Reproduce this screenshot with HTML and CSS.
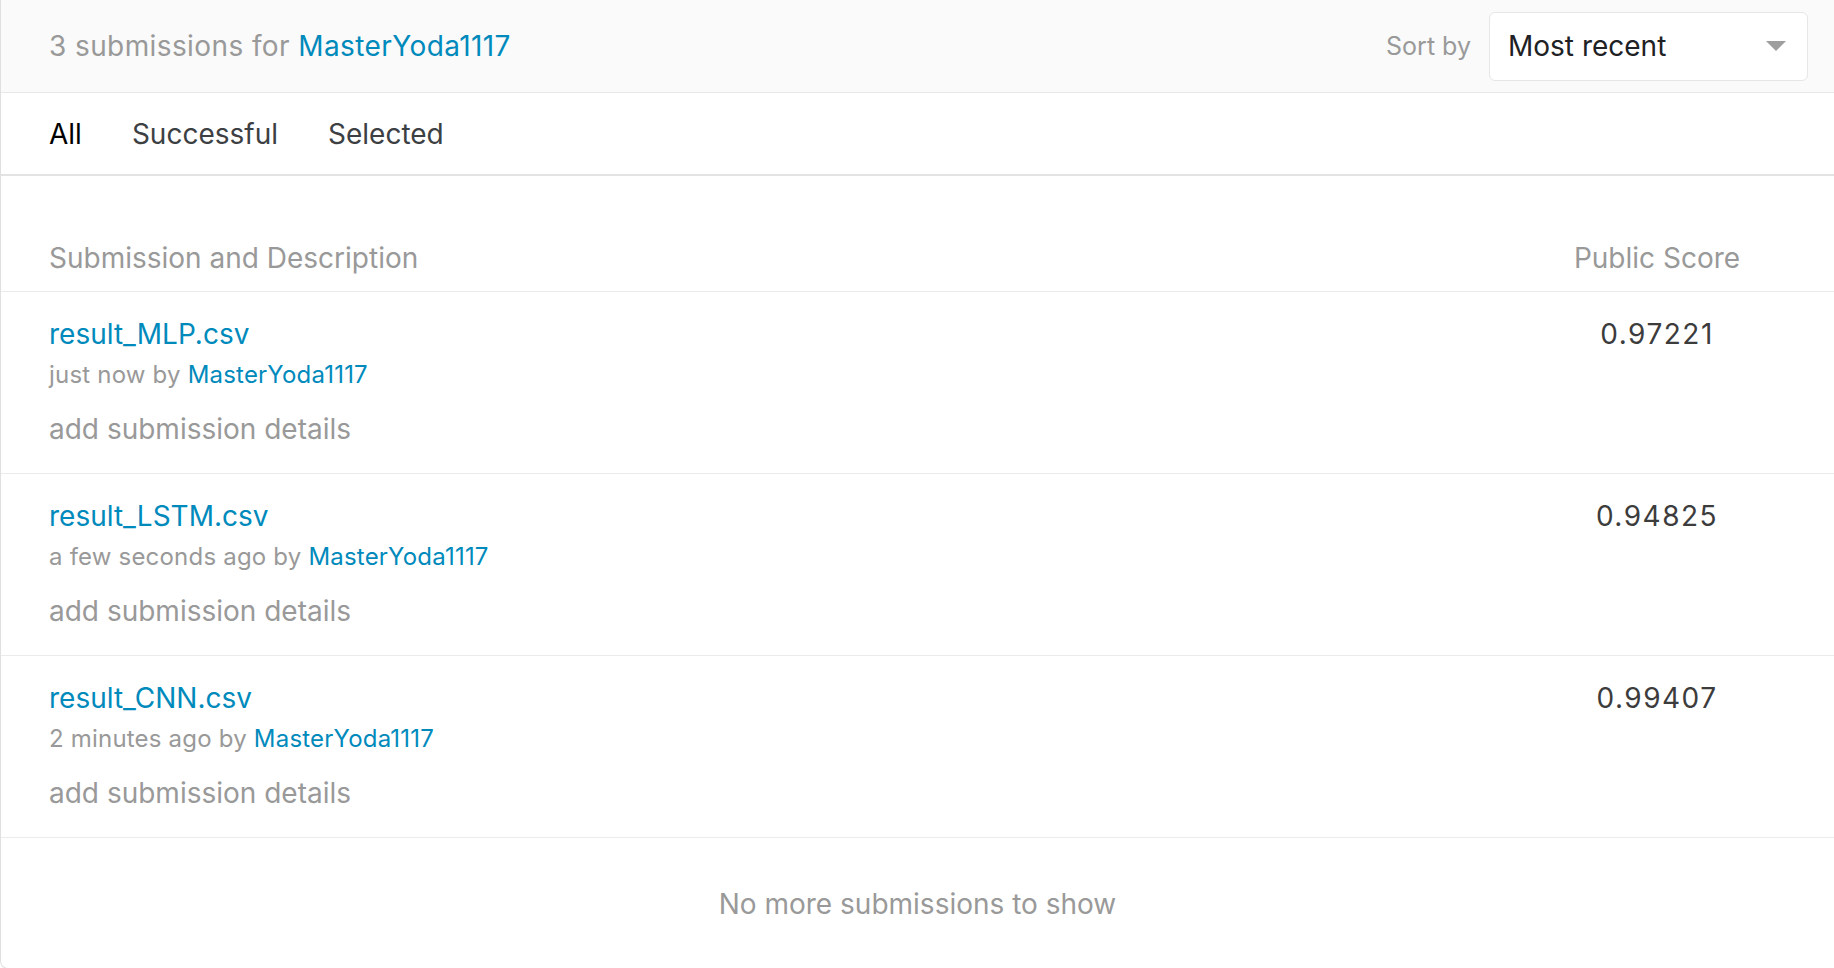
FILE: index.html
```html
<!DOCTYPE html>
<html lang="en">
<head>
<meta charset="utf-8">
<title>Submissions</title>
<link rel="stylesheet" href="styles.css">
</head>
<body>
<div class="card">
  <header class="top">
    <div class="count">3 submissions for <a class="link" href="#">MasterYoda1117</a></div>
    <div class="sort">
      <span class="sort-label">Sort by</span>
      <div class="select">
        <span class="select-value">Most recent</span>
        <svg class="caret" width="20" height="10" viewBox="0 0 20 10"><path d="M0 0 L20 0 L10 10 Z" fill="#9e9e9e"/></svg>
      </div>
    </div>
  </header>
  <nav class="tabs">
    <a class="tab active" href="#">All</a>
    <a class="tab" href="#">Successful</a>
    <a class="tab" href="#">Selected</a>
  </nav>
  <div class="table">
    <div class="thead">
      <div class="col-main">Submission and Description</div>
      <div class="col-score">Public Score</div>
    </div>
    <div class="row">
      <div class="col-main">
        <a class="file" href="#">result_MLP.csv</a>
        <div class="meta">just now by <a class="link" href="#">MasterYoda1117</a></div>
        <div class="details">add submission details</div>
      </div>
      <div class="col-score score">0.97221</div>
    </div>
    <div class="row">
      <div class="col-main">
        <a class="file" href="#">result_LSTM.csv</a>
        <div class="meta">a few seconds ago by <a class="link" href="#">MasterYoda1117</a></div>
        <div class="details">add submission details</div>
      </div>
      <div class="col-score score">0.94825</div>
    </div>
    <div class="row">
      <div class="col-main">
        <a class="file" href="#">result_CNN.csv</a>
        <div class="meta">2 minutes ago by <a class="link" href="#">MasterYoda1117</a></div>
        <div class="details">add submission details</div>
      </div>
      <div class="col-score score">0.99407</div>
    </div>
    <div class="footer">No more submissions to show</div>
  </div>
</div>
</body>
</html>
```
FILE: styles.css
```css
html, body {
  margin: 0;
  padding: 0;
  background: #ffffff;
  overflow: hidden;
}
body {
  font-family: Inter, "Noto Sans", sans-serif;
  color: #3c3c3c;
}
a { text-decoration: none; }
.card {
  border-left: 1px solid #e0e0e0;
  border-bottom: 1px solid #e0e0e0;
  border-bottom-left-radius: 8px;
  min-height: 968px;
}
.top {
  height: 92px;
  background: #fafafa;
  border-bottom: 1px solid #e8e8e8;
  display: flex;
  align-items: center;
  justify-content: space-between;
  padding: 0 26px 0 48px;
}
.count {
  font-size: 28px;
  letter-spacing: 0.4px;
  color: #999999;
}
.link { color: #008abc; }
.sort {
  display: flex;
  align-items: center;
  gap: 18px;
}
.sort-label {
  font-size: 25px;
  color: #999999;
}
.select {
  box-sizing: border-box;
  width: 319px;
  height: 69px;
  border: 1px solid #e6e6e6;
  border-radius: 6px;
  background: #ffffff;
  display: flex;
  align-items: center;
  justify-content: space-between;
  padding: 0 21px 0 18px;
}
.select-value {
  font-size: 28px;
  color: #202124;
}
.tabs {
  height: 81px;
  border-bottom: 2px solid #e3e3e3;
  display: flex;
  align-items: center;
  gap: 50px;
  padding-left: 48px;
}
.tab {
  font-size: 28px;
  color: #3c4043;
}
.tab.active { color: #000000; }
.table {
  padding-top: 65px;
}
.thead, .row {
  display: flex;
  border-bottom: 1px solid #ebebeb;
  padding: 0 82px 0 48px;
}
.thead {
  font-size: 28px;
  color: #999999;
  line-height: 34px;
  padding-bottom: 16px;
}
.col-main { flex: 1; }
.col-score {
  width: 190px;
  text-align: center;
  white-space: nowrap;
}
.row {
  padding-top: 25px;
  padding-bottom: 27px;
}
.file {
  display: block;
  font-size: 28px;
  line-height: 34px;
  color: #008abc;
}
.meta {
  margin-top: 9px;
  font-size: 24px;
  line-height: 30px;
  letter-spacing: 0.2px;
  color: #999999;
}
.details {
  margin-top: 22px;
  font-size: 28px;
  line-height: 34px;
  color: #999999;
}
.score {
  font-size: 28px;
  line-height: 34px;
  letter-spacing: 1.5px;
  color: #3c3c3c;
}
.footer {
  text-align: center;
  font-size: 28px;
  line-height: 34px;
  color: #999999;
  padding-top: 49px;
}
```
